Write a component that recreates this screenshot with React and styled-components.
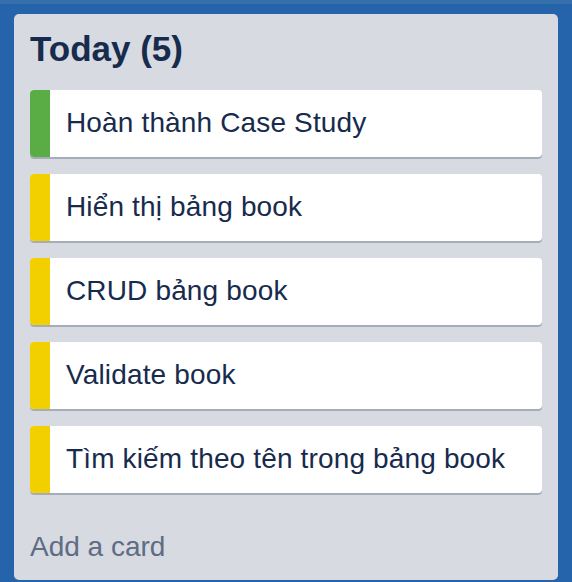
import React from "react";
import styled, { createGlobalStyle } from "styled-components";

const Global = createGlobalStyle`
  html, body { margin: 0; padding: 0; background: #2563ab; }
  body { font-family: "Liberation Sans", Arial, sans-serif; }
`;

const Page = styled.div`
  box-sizing: border-box;
  width: 572px;
  height: 582px;
  border-top: 4px solid #3570ad;
  background: #2563ab;
  padding: 10px 14px 2px 14px;
`;

const List = styled.section`
  box-sizing: border-box;
  height: 566px;
  background: #d7dae0;
  border-radius: 5px;
  padding: 15px 16px 16px 16px;
  display: flex;
  flex-direction: column;
`;

const Title = styled.h2`
  margin: 0 0 21px 0;
  font-size: 35px;
  line-height: 40px;
  font-weight: 700;
  color: #172b4d;
`;

const Cards = styled.div`
  display: flex;
  flex-direction: column;
  gap: 17px;
`;

const Card = styled.div`
  display: flex;
  height: 67px;
  background: #ffffff;
  border-radius: 4px;
  box-shadow: 0 2px 0 #a5adba;
  overflow: hidden;
`;

const Label = styled.div`
  width: 20px;
  flex: none;
  background: ${(p) => p.$color};
`;

const CardText = styled.div`
  display: flex;
  align-items: center;
  padding: 0 0 2px 16px;
  font-size: 28px;
  letter-spacing: 0.15px;
  color: #172b4d;
`;

const AddCard = styled.div`
  margin-top: auto;
  font-size: 28px;
  line-height: 34px;
  color: #5e6c84;
`;

const GREEN = "#5aac44";
const YELLOW = "#f2d000";

const cards = [
  { text: "Hoàn thành Case Study", color: GREEN },
  { text: "Hiển thị bảng book", color: YELLOW },
  { text: "CRUD bảng book", color: YELLOW },
  { text: "Validate book", color: YELLOW },
  { text: "Tìm kiếm theo tên trong bảng book", color: YELLOW },
];

export default function App() {
  return (
    <>
      <Global />
      <Page>
        <List>
          <Title>Today (5)</Title>
          <Cards>
            {cards.map((c) => (
              <Card key={c.text}>
                <Label $color={c.color} />
                <CardText>{c.text}</CardText>
              </Card>
            ))}
          </Cards>
          <AddCard>Add a card</AddCard>
        </List>
      </Page>
    </>
  );
}
